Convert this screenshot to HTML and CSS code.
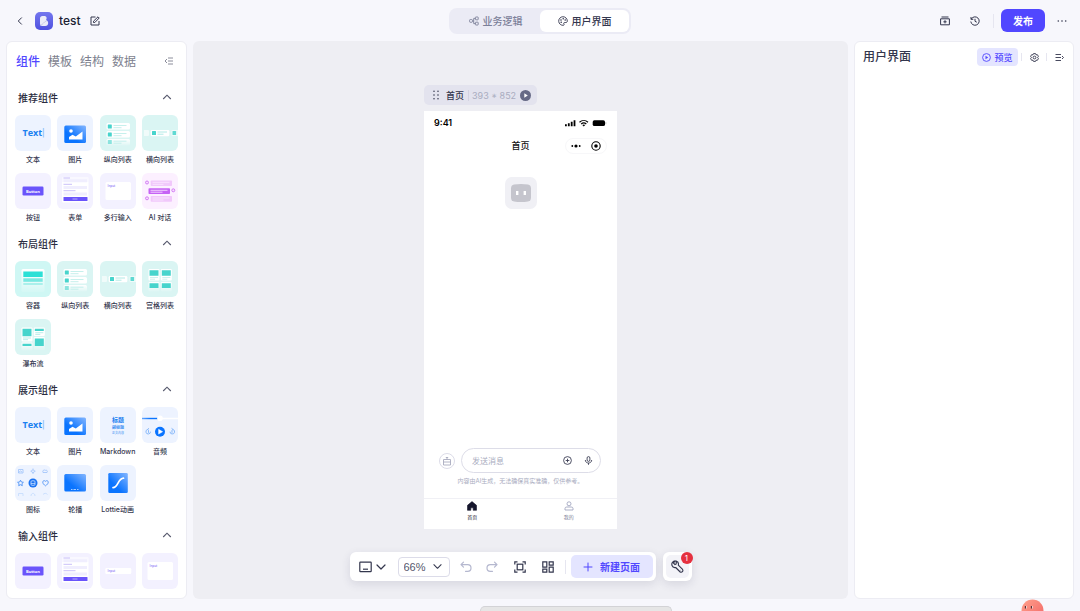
FILE: index.html
```html
<!DOCTYPE html>
<html lang="zh-CN">
<head>
    <meta charset="UTF-8">
    <meta name="viewport" content="width=device-width, initial-scale=1.0">
    <title>test</title>
    <link rel="stylesheet" href="styles.css">
</head>
<body>
    <!-- 图标定义 -->
    <svg class="defs" aria-hidden="true">
        <defs>
            <linearGradient id="blue" x1="0" y1="1" x2="1" y2="0">
                <stop offset="0.35" stop-color="#0a74ff"/>
                <stop offset="1" stop-color="#84b6ff"/>
            </linearGradient>
            <linearGradient id="fade" x1="0" y1="0" x2="0" y2="1">
                <stop offset="0" stop-color="#fff"/>
                <stop offset="1" stop-color="#fff" stop-opacity="0.1"/>
            </linearGradient>
            <linearGradient id="track" x1="0" y1="0" x2="1" y2="0">
                <stop offset="0" stop-color="#0a74ff" stop-opacity="0.6"/>
                <stop offset="0.5" stop-color="#0a74ff"/>
            </linearGradient>
            <linearGradient id="logoBg" x1="0" y1="0" x2="0" y2="1">
                <stop offset="0" stop-color="#7477ee"/>
                <stop offset="1" stop-color="#4f51e0"/>
            </linearGradient>
        </defs>
        <symbol id="up" viewBox="0 0 10 10"><path d="M1.2 7 5 3.200 8.800 7" fill="none" stroke="currentColor" stroke-width="1.1"/></symbol>
        <symbol id="down" viewBox="0 0 10 10"><path d="M1 3 5 7 9 3" fill="none" stroke="currentColor" stroke-width="1.2" stroke-linecap="round" stroke-linejoin="round"/></symbol>

        <symbol id="c-image" viewBox="0 0 36 36">
            <rect x="7.300" y="10.500" width="21.700" height="17.500" rx="1.500" fill="url(#blue)"/>
            <circle cx="14" cy="16" r="1.800" fill="#fff"/>
            <path d="M12 24.500v-2.500l3.500-2.300 3.300 1.800 6.700-5v8z" fill="#fff"/>
        </symbol>
        <symbol id="c-vlist" viewBox="0 0 36 36">
            <g fill="#fff">
                <rect x="6.500" y="8" width="23.500" height="6.500" rx="1.500"/>
                <rect x="6.500" y="16" width="23.500" height="6.500" rx="1.500"/>
                <rect x="6.500" y="24" width="23.500" height="6.500" rx="1.500" fill="url(#fade)"/>
            </g>
            <g fill="#47d4cc">
                <rect x="7.800" y="9.500" width="4" height="4" rx=".5"/>
                <rect x="7.800" y="17.500" width="4" height="4" rx=".5"/>
                <rect x="7.800" y="25" width="4" height="4" rx=".5" opacity=".6"/>
            </g>
            <path d="M13.500 10.500h13M13.500 12.700h8M13.500 18.500h13M13.500 20.700h8M13.500 26.200h13M13.500 28.200h8" stroke="#bfeeea" stroke-width=".9"/>
        </symbol>
        <symbol id="c-hlist" viewBox="0 0 36 36">
            <path d="M2 15h4a1 1 0 0 1 1 1v4a1 1 0 0 1-1 1H2z" fill="#fff" opacity=".6"/>
            <rect x="8.700" y="15" width="18.600" height="6.200" rx="1.200" fill="#fff"/>
            <path d="M36 15h-5.500a1 1 0 0 0-1 1v4a1 1 0 0 0 1 1H36z" fill="#fff" opacity=".6"/>
            <rect x="10" y="16" width="4" height="4" rx=".5" fill="#47d4cc"/>
            <rect x="30.500" y="16" width="3.600" height="4" rx=".5" fill="#5fd9d2"/>
            <path d="M15.500 17h9.500M15.500 19.200h6" stroke="#a8e8e3" stroke-width=".9"/>
        </symbol>
        <symbol id="c-form" viewBox="0 0 36 36">
            <rect x="5" y="4" width="26.500" height="25.500" rx="1" fill="#fff"/>
            <path d="M5 4h26.500v5H5z" fill="#f3f1ff" opacity=".5"/>
            <path d="M6.500 7.800h23.500M6.500 14.500h23.500M6.500 21h23.500" stroke="#f0eefe" stroke-width="3"/>
            <path d="M6.500 5h6.500M6.500 11.300h8.500M6.500 17.700h12" stroke="#c3b9f8" stroke-width=".9"/>
            <rect x="6.500" y="24" width="24" height="4" rx=".6" fill="#6a54fb"/>
            <path d="M15.500 26h5" stroke="#d5cdff" stroke-width=".7"/>
        </symbol>
        <symbol id="c-chat" viewBox="0 0 36 36">
            <g fill="#f1c8fb"><rect x="8.700" y="7.500" width="21.300" height="5.500" rx=".8"/><rect x="8.700" y="23" width="21.300" height="5.800" rx=".8"/></g>
            <rect x="6.500" y="15.300" width="21.500" height="5.700" rx=".8" fill="#c663f5"/>
            <path d="M10.500 9.300h17M10.500 11.300h11M8.500 17.300h17M8.500 19.200h12M10.500 25h17M10.500 27h11" stroke="#fbeaff" stroke-width=".8"/>
            <g fill="#f7dcff" stroke="#cf75f2" stroke-width=".9"><circle cx="5" cy="9.500" r="1.500"/><circle cx="31.300" cy="17.300" r="1.500"/><circle cx="5" cy="25.300" r="1.500"/></g>
        </symbol>
        <symbol id="c-box" viewBox="0 0 36 36">
            <rect x="6.500" y="8" width="23" height="23" rx="1.500" fill="url(#fade)"/>
            <rect x="8.300" y="10.500" width="19.400" height="5.500" fill="#2be0d6"/>
            <rect x="8.300" y="17.300" width="19.400" height="3.500" fill="#79e8e1"/>
            <rect x="8.300" y="22" width="19.400" height="2" fill="#a9f0eb"/>
        </symbol>
        <symbol id="c-grid" viewBox="0 0 36 36">
            <g fill="#fff"><rect x="6.500" y="8" width="11" height="11.500" rx="1"/><rect x="18.800" y="8" width="11" height="11.500" rx="1"/></g>
            <g fill="url(#fade)"><rect x="6.500" y="21" width="11" height="9.500" rx="1"/><rect x="18.800" y="21" width="11" height="9.500" rx="1"/></g>
            <path d="M7.500 9.200h9v5.500h-9zM19.800 9.200h9v5.500h-9zM7.500 22.200h9v4.800h-9zM19.800 22.200h9v4.800h-9z" fill="#47d4cc"/>
            <path d="M8 16.500h8M8 18.200h5M20.300 16.500h8M20.300 18.200h5" stroke="#bfeeea" stroke-width=".8"/>
        </symbol>
        <symbol id="c-flow" viewBox="0 0 36 36">
            <g fill="#fff"><rect x="6.500" y="8.500" width="11" height="14" rx="1"/><rect x="18.800" y="8.500" width="11" height="8.500" rx="1"/></g>
            <g fill="url(#fade)"><rect x="6.500" y="23.500" width="11" height="8" rx="1"/><rect x="18.800" y="18" width="11" height="13" rx="1"/></g>
            <path d="M7.500 9.800h9v7.500h-9zM19.800 9.800h9v2.200h-9zM19.800 19.500h9v7.500h-9zM7.500 24.700h9v2.300h-9z" fill="#47d4cc"/>
            <path d="M8 19h8M8 20.700h5M20.300 13.700h8M20.300 15.400h5" stroke="#a8e8e3" stroke-width=".8"/>
        </symbol>
        <symbol id="c-audio" viewBox="0 0 36 36">
            <rect y="10.800" width="17" height="1.400" fill="url(#track)"/>
            <path d="M18 11.500h18" stroke="#fff" stroke-width="1.300"/>
            <circle cx="18" cy="11.300" r="2.800" fill="#fff"/>
            <circle cx="18" cy="24.700" r="5" fill="#0a74ff"/>
            <path d="M16.600 22.300v4.800l4-2.400z" fill="#fff" stroke="#fff" stroke-width=".5" stroke-linejoin="round"/>
            <g fill="none" stroke="#7fb3f8" stroke-width=".9">
                <path d="M5.500 22.500a2.300 2.300 0 1 0 3 2.200M7 21.300l-1.600 1.200L7 23.700M6.500 23.800v2"/>
                <path d="M31 22.500a2.300 2.300 0 1 1-3 2.200M29.500 21.300l1.600 1.200-1.600 1.200M30 23.800v2"/>
            </g>
        </symbol>
        <symbol id="c-icons" viewBox="0 0 36 36">
            <circle cx="18" cy="18" r="4.500" fill="#1a73f2"/>
            <rect x="16" y="15.800" width="4" height="4.500" rx="1" fill="none" stroke="#cfe2ff" stroke-width=".8"/>
            <path d="M16 18.500h4" stroke="#cfe2ff" stroke-width=".7"/>
            <g fill="none" stroke="#4b91f5" stroke-width=".9" stroke-linejoin="round">
                <path d="m5.500 15.200.9 1.800 2 .3-1.500 1.400.4 2-1.800-1-1.800 1 .4-2-1.500-1.400 2-.3z"/>
                <path d="M30.500 20.800c-5-3.300-2-6.500 0-4.500 2-2 5 1.200 0 4.500z"/>
            </g>
            <g fill="none" stroke="#9dc2fa" stroke-width=".8">
                <path d="M3.500 4.500h4.500v3.500H3.500zM3.500 7.500l2-1.500 1.500 1M28 7.500c-.8-2 1-3.200 2.300-2.200 1.500-.5 2.700.8 1.700 2.200z"/>
                <circle cx="18" cy="6.200" r="1.400"/><path d="M18 3.500v1M18 8v1M15.500 6.200h1M19.500 6.200h1"/>
            </g>
            <path d="M3.500 31v-2.500h4.500V31M16 31c0-3.500 4-3.500 4 0M28 29.500c1-1.500 3.500-1.500 4.500 0" fill="none" stroke="#c3dafc" stroke-width=".8"/>
        </symbol>
        <symbol id="c-slide" viewBox="0 0 36 36">
            <rect x="7.300" y="9" width="21.700" height="17.500" rx="1.500" fill="url(#blue)"/>
            <path d="M14 24.500h1.500M16.500 24.500h2.500M20 24.500h1.500" stroke="#cfe2ff" stroke-width=".8"/>
        </symbol>
        <symbol id="c-lottie" viewBox="0 0 36 36">
            <rect x="8.300" y="8" width="19.500" height="20" rx="1.300" fill="url(#blue)"/>
            <path d="M13 22.700c5.500-.3 4.500-9 10.500-9.500" fill="none" stroke="#fff" stroke-width="1.700" stroke-linecap="round"/>
        </symbol>
    </svg>

    <header class="topbar">
        <div class="project">
            <button class="icon-btn" aria-label="返回">
                <svg width="10" height="10" viewBox="0 0 10 10"><path d="M6.500 1.800 3.300 5l3.200 3.200" fill="none" stroke="currentColor" stroke-width="1" stroke-linecap="round" stroke-linejoin="round"/></svg>
            </button>
            <svg class="logo" width="18" height="18" viewBox="0 0 18 18">
                <rect width="18" height="18" rx="5" fill="url(#logoBg)"/>
                <path d="M5 6.500A2.500 2.500 0 0 1 7.500 4h1.700c2.600 0 3 2.500 1.800 4 2.800.5 3.300 6-.8 6H7a2 2 0 0 1-2-2z" fill="#ececf8"/>
                <path d="M5.300 13.300c2.700-.3 3-3.300 6.700-4.800" fill="none" stroke="#c3c3df" stroke-width=".8"/>
            </svg>
            <h1>test</h1>
            <button class="icon-btn" aria-label="编辑">
                <svg width="10" height="10" viewBox="0 0 10 10" fill="none" stroke="currentColor" stroke-width="1"><path d="M5.500 1H1v8h8V5M3.500 6.500V5.200L8 .8 9.200 2 4.800 6.500z" stroke-linejoin="round"/></svg>
            </button>
        </div>
        <nav class="switch">
            <button>
                <svg width="10" height="10" viewBox="0 0 10 10" fill="none" stroke="currentColor" stroke-width=".9"><rect x=".6" y="3.500" width="2.800" height="2.800" rx=".8"/><rect x="6.400" y="1" width="2.800" height="2.800" rx=".5"/><rect x="6.400" y="6.200" width="2.800" height="2.800" rx=".5"/><path d="M3.400 5H4.700V2.400h1.700M4.700 5v2.600h1.700"/></svg>
                业务逻辑
            </button>
            <button class="on">
                <svg width="10" height="10" viewBox="0 0 10 10" fill="none" stroke="currentColor" stroke-width=".9"><path d="M5.500 9.300A4.300 4.300 0 1 1 9.300 5c0 1.500-1 1.600-2.200 1.500-1.300-.1-1.700.6-1.200 1.400.4.700.2 1.300-.4 1.400z"/><g fill="currentColor" stroke="none"><circle cx="3" cy="4" r=".8"/><circle cx="5.200" cy="2.700" r=".8"/><circle cx="7.200" cy="4" r=".8"/><circle cx="3.200" cy="6.300" r=".8"/></g></svg>
                用户界面
            </button>
        </nav>
        <div class="actions">
            <button class="icon-btn" aria-label="资源">
                <svg width="10" height="10" viewBox="0 0 10 10" fill="none" stroke="currentColor" stroke-width="1"><path d="M1.500 1h7M.6 2.800h8.800v6H.6zM5 4.200v3.200M3.400 5.800h3.200"/></svg>
            </button>
            <button class="icon-btn" aria-label="历史">
                <svg width="10" height="10" viewBox="0 0 10 10" fill="none" stroke="currentColor" stroke-width="1"><path d="M1.200 3.200A4.200 4.200 0 1 1 .8 5.500M1 1v2.300h2.300M5 2.800v2.500l1.800.9"/></svg>
            </button>
            <i class="line"></i>
            <button class="publish">发布</button>
            <button class="icon-btn" aria-label="更多">
                <svg width="10" height="10" viewBox="0 0 10 10" fill="currentColor"><circle cx="1.300" cy="5" r=".8"/><circle cx="5" cy="5" r=".8"/><circle cx="8.700" cy="5" r=".8"/></svg>
            </button>
        </div>
    </header>

    <main class="work">
        <aside class="panel library">
            <div class="tabs">
                <button class="on">组件</button>
                <button>模板</button>
                <button>结构</button>
                <button>数据</button>
                <button class="icon-btn fold" aria-label="收起">
                    <svg width="10" height="10" viewBox="0 0 10 10" fill="none" stroke="currentColor" stroke-width=".9"><path d="M4 2h5M4 5h5M4 8h5M3 3 1 5l2 2"/></svg>
                </button>
            </div>
            <div class="scroll">
                <section>
                    <h2>推荐组件<svg><use href="#up"/></svg></h2>
                    <ul class="comps">
                        <li>
                            <svg class="blue" viewBox="0 0 36 36"><text x="7.500" y="21" font-size="9" font-weight="700" fill="#1a80f0">Text</text><path d="M28.500 13v9.500" stroke="#a3cdfb" stroke-width="1.300"/></svg>
                            文本
                        </li>
                        <li><svg class="blue"><use href="#c-image"/></svg>图片</li>
                        <li><svg class="teal"><use href="#c-vlist"/></svg>纵向列表</li>
                        <li><svg class="teal"><use href="#c-hlist"/></svg>横向列表</li>
                        <li>
                            <svg class="purple" viewBox="0 0 36 36"><rect x="7.500" y="13.500" width="21" height="9" rx="1.200" fill="#6a54fb"/><text x="18" y="19.500" font-size="4" font-weight="700" text-anchor="middle" fill="#fff">Button</text></svg>
                            按钮
                        </li>
                        <li><svg class="purple"><use href="#c-form"/></svg>表单</li>
                        <li>
                            <svg class="purple" viewBox="0 0 36 36"><rect x="5.500" y="9" width="25.500" height="18" rx="1.500" fill="#fff"/><text x="7.500" y="13.700" font-size="3" font-weight="600" fill="#8b78f6">Input</text></svg>
                            多行输入
                        </li>
                        <li><svg class="pink"><use href="#c-chat"/></svg>AI 对话</li>
                    </ul>
                </section>
                <section>
                    <h2>布局组件<svg><use href="#up"/></svg></h2>
                    <ul class="comps">
                        <li><svg class="cyan"><use href="#c-box"/></svg>容器</li>
                        <li><svg class="teal"><use href="#c-vlist"/></svg>纵向列表</li>
                        <li><svg class="teal"><use href="#c-hlist"/></svg>横向列表</li>
                        <li><svg class="teal"><use href="#c-grid"/></svg>宫格列表</li>
                        <li><svg class="teal"><use href="#c-flow"/></svg>瀑布流</li>
                    </ul>
                </section>
                <section>
                    <h2>展示组件<svg><use href="#up"/></svg></h2>
                    <ul class="comps">
                        <li>
                            <svg class="blue" viewBox="0 0 36 36"><text x="7.500" y="21" font-size="9" font-weight="700" fill="#1a80f0">Text</text><path d="M28.500 13v9.500" stroke="#a3cdfb" stroke-width="1.300"/></svg>
                            文本
                        </li>
                        <li><svg class="blue"><use href="#c-image"/></svg>图片</li>
                        <li>
                            <svg class="blue" viewBox="0 0 36 36" text-anchor="middle"><text x="18" y="15" font-size="6" font-weight="700" fill="#1a80f0">标题</text><text x="18" y="21.500" font-size="4" font-weight="700" fill="#3a8ff2">副标题</text><text x="18" y="27" font-size="3" fill="#4f9bf3">正文内容</text></svg>
                            Markdown
                        </li>
                        <li><svg class="blue"><use href="#c-audio"/></svg>音频</li>
                        <li><svg class="blue"><use href="#c-icons"/></svg>图标</li>
                        <li><svg class="blue"><use href="#c-slide"/></svg>轮播</li>
                        <li><svg class="blue"><use href="#c-lottie"/></svg>Lottie动画</li>
                    </ul>
                </section>
                <section>
                    <h2>输入组件<svg><use href="#up"/></svg></h2>
                    <ul class="comps">
                        <li><svg class="purple" viewBox="0 0 36 36"><rect x="7.500" y="13.500" width="21" height="9" rx="1.200" fill="#6a54fb"/><text x="18" y="19.500" font-size="4" font-weight="700" text-anchor="middle" fill="#fff">Button</text></svg></li>
                        <li><svg class="purple"><use href="#c-form"/></svg></li>
                        <li><svg class="purple" viewBox="0 0 36 36"><rect x="5.300" y="15" width="26" height="6" rx="1.300" fill="#fff"/><text x="7.500" y="19.200" font-size="3" font-weight="600" fill="#8b78f6">Input</text></svg></li>
                        <li><svg class="purple" viewBox="0 0 36 36"><rect x="5.500" y="9" width="25.500" height="18" rx="1.500" fill="#fff"/><text x="7.500" y="13.700" font-size="3" font-weight="600" fill="#8b78f6">Input</text></svg></li>
                    </ul>
                </section>
            </div>
        </aside>

        <div class="canvas">
            <div class="device">
                <div class="page-tag">
                    <svg width="6" height="10" viewBox="0 0 6 10" fill="#3d4056"><circle cx="1" cy="1.200" r=".8"/><circle cx="5" cy="1.200" r=".8"/><circle cx="1" cy="5" r=".8"/><circle cx="5" cy="5" r=".8"/><circle cx="1" cy="8.800" r=".8"/><circle cx="5" cy="8.800" r=".8"/></svg>
                    <b>首页</b>
                    <span>393 * 852</span>
                    <svg width="11" height="11" viewBox="0 0 11 11"><circle cx="5.500" cy="5.500" r="5.500" fill="#666a86"/><path d="M4.300 3.200v4.600l3.500-2.300z" fill="#fff"/></svg>
                </div>
                <div class="phone">
                    <div class="status">
                        <span>9:41</span>
                        <svg width="42" height="8" viewBox="0 0 42 8">
                            <path d="M0 5.300h1.800v2H0zM2.900 4.300h1.800v3H2.900zM5.800 2.800h1.800v4.500H5.800zM8.600 1.200h1.800v6.100H8.600z"/>
                            <path d="M14.500 3.200c2.500-2.300 6-2.300 8.500 0M16.200 5c1.500-1.300 3.600-1.300 5.100 0" fill="none" stroke="#000" stroke-width="1.200"/>
                            <path d="m17.300 5.900 1.450 1.600 1.450-1.600c-.9-.7-2-.7-2.900 0z"/>
                            <rect x="27.700" y="1.300" width="12.300" height="5.800" rx="1.700"/><path d="M40.800 3.200v2" stroke="#999" stroke-width=".7"/>
                        </svg>
                    </div>
                    <div class="navbar">
                        <span>首页</span>
                        <div class="capsule">
                            <svg width="10" height="10" viewBox="0 0 10 10"><circle cx="1.300" cy="5" r=".9"/><circle cx="5" cy="5" r="1.600"/><circle cx="8.700" cy="5" r=".9"/></svg>
                            <svg width="10" height="10" viewBox="0 0 10 10"><circle cx="5" cy="5" r="4.200" fill="none" stroke="#000" stroke-width="1.100"/><circle cx="5" cy="5" r="1.800"/></svg>
                        </div>
                    </div>
                    <svg class="avatar" viewBox="0 0 32 32">
                        <path d="M9 7.500Q16 6.500 23 7.500 26 8 26 11.500v9Q26 24 23 24.500q-7 1-14 0Q6 24 6 20.500v-9Q6 8 9 7.500z" fill="#c5c5cd"/>
                        <path d="M12.200 14v4M19.800 14v4" stroke="#fff" stroke-width="2.400"/>
                    </svg>
                    <div class="chat">
                        <svg width="16" height="16" viewBox="0 0 16 16" fill="none"><circle cx="8" cy="8" r="7.500" stroke="#dcdce8"/><path d="M4.500 6.500h7v5.500h-7zM4.500 9h7M8 6.500V4.300M6.800 4.500h2.400" stroke="#a9acc0" stroke-width=".9" stroke-linejoin="round"/></svg>
                        <div class="message">
                            <input type="text" placeholder="发送消息" aria-label="发送消息">
                            <svg width="9" height="9" viewBox="0 0 9 9" fill="none" stroke="#3d4056" stroke-width=".9"><circle cx="4.500" cy="4.500" r="3.900"/><path d="M4.500 2.700v3.600M2.700 4.500h3.600"/></svg>
                            <svg width="9" height="9" viewBox="0 0 9 9" fill="none" stroke="#3d4056" stroke-width=".9"><rect x="3.100" y=".6" width="2.800" height="4.800" rx="1.400"/><path d="M1.300 4c0 4 6.400 4 6.400 0M4.500 7v1.800"/></svg>
                        </div>
                    </div>
                    <p class="notice">内容由AI生成，无法确保真实准确，仅供参考。</p>
                    <nav class="tabbar">
                        <a href="#" class="on">
                            <svg width="10" height="10" viewBox="0 0 10 10"><path d="M5 .6 9.500 4.300V9.300H6.200V6.800H3.800v2.500H.5v-5z" fill="#15162c" stroke="#15162c" stroke-width=".6" stroke-linejoin="round"/></svg>
                            首页
                        </a>
                        <a href="#">
                            <svg width="10" height="10" viewBox="0 0 10 10" fill="none" stroke="#a2a6c0" stroke-width=".9"><circle cx="5" cy="2.800" r="2"/><path d="M1 9V7.500Q1 6 2.800 6h4.400Q9 6 9 7.500V9z"/></svg>
                            我的
                        </a>
                    </nav>
                </div>
            </div>

            <div class="dock">
                <div class="tools">
                    <button class="icon-btn screen" aria-label="设备">
                        <svg width="13" height="12" viewBox="0 0 13 12" fill="none" stroke="currentColor" stroke-width="1.200"><rect x=".8" y="1.200" width="11.400" height="9.500" rx=".6"/><path d="M4 8.200h5"/></svg>
                        <svg width="10" height="10"><use href="#down"/></svg>
                    </button>
                    <label class="zoom">
                        <select aria-label="缩放"><option>66%</option><option>100%</option></select>
                        <svg width="9" height="9"><use href="#down"/></svg>
                    </label>
                    <button class="icon-btn off undo" aria-label="撤销">
                        <svg width="12" height="12" viewBox="0 0 12 12" fill="none" stroke="currentColor" stroke-width="1.200" stroke-linecap="round" stroke-linejoin="round"><path d="M3.500 1.200 1 3.700l2.500 2.500M1.200 3.700h6.500a3.300 3.300 0 0 1 0 6.600H5.500"/></svg>
                    </button>
                    <button class="icon-btn off" aria-label="重做">
                        <svg width="12" height="12" viewBox="0 0 12 12" fill="none" stroke="currentColor" stroke-width="1.200" stroke-linecap="round" stroke-linejoin="round"><path d="M8.500 1.200 11 3.700 8.500 6.200M10.800 3.700H4.300a3.300 3.300 0 0 0 0 6.600h2.200"/></svg>
                    </button>
                    <button class="icon-btn" aria-label="适应画布">
                        <svg width="12" height="12" viewBox="0 0 12 12" fill="none" stroke="currentColor" stroke-width="1.200"><path d="M.8 3.500V.8h2.700M8.500.8h2.700v2.700M11.200 8.500v2.700H8.500M3.500 11.200H.8V8.500"/><rect x="3.200" y="3.200" width="5.600" height="5.600"/></svg>
                    </button>
                    <button class="icon-btn" aria-label="排列">
                        <svg width="12" height="12" viewBox="0 0 12 12" fill="none" stroke="currentColor" stroke-width="1.200"><path d="M.8.800h4v5.400h-4zM7.200.800h4v3.400h-4zM.8 8.200h4v3h-4zM7.200 6.200h4v5h-4z"/></svg>
                    </button>
                    <i class="line"></i>
                    <button class="new-page">
                        <svg width="10" height="10" viewBox="0 0 10 10"><path d="M5 1v8M1 5h8" stroke="currentColor" stroke-width="1" stroke-linecap="round"/></svg>
                        新建页面
                    </button>
                </div>
                <div class="debug">
                    <button aria-label="调试">
                        <svg width="13" height="13" viewBox="0 0 13 13" fill="none" stroke="currentColor" stroke-width="1.100" stroke-linejoin="round"><path d="M4.300.9A3.500 3.500 0 0 0 1 5.500c.6 1.700 2.200 2.300 3.700 2L9.200 12c1.800.8 3.300-1 2.400-2.600L7.300 5.200C7.800 3.400 7 1.600 5.200 1v3L4 4.600 2.500 3z"/><path d="M9.700 10.200h.3"/></svg>
                    </button>
                    <span class="badge">1</span>
                </div>
            </div>
        </div>

        <aside class="panel props">
            <h2>用户界面</h2>
            <button class="preview">
                <svg width="9" height="9" viewBox="0 0 9 9"><circle cx="4.500" cy="4.500" r="3.900" fill="none" stroke="currentColor" stroke-width=".9"/><path d="M3.500 2.800v3.400l2.700-1.700z" fill="currentColor"/></svg>
                预览
            </button>
            <i class="line"></i>
            <button class="icon-btn" aria-label="设置">
                <svg width="9" height="9" viewBox="0 0 9 9" fill="none" stroke="currentColor" stroke-width=".9"><path d="m3.500.6h2l.5 1.200 1.400-.1 1 1.700-.8 1.100.8 1.100-1 1.700-1.400-.1-.5 1.200h-2L3 7.200l-1.400.1-1-1.700.8-1.100-.8-1.100 1-1.700 1.400.1z" stroke-linejoin="round"/><circle cx="4.500" cy="4.500" r="1.400"/></svg>
            </button>
            <i class="line"></i>
            <button class="icon-btn" aria-label="收起">
                <svg width="9" height="9" viewBox="0 0 9 9" fill="none" stroke="currentColor" stroke-width=".9"><path d="M.5 1.500h5.500M.5 4.500h5.500M.5 7.500h5.500M7 3l1.500 1.500L7 6"/></svg>
            </button>
        </aside>
    </main>

    <div class="drawer"></div>
    <svg class="mascot" width="23" height="12" viewBox="0 0 23 12">
        <defs><linearGradient id="skin" x1="0" y1="0" x2="1" y2="1"><stop offset="0" stop-color="#ffa18c"/><stop offset="1" stop-color="#f26464"/></linearGradient></defs>
        <circle cx="11.500" cy="11.500" r="11" fill="url(#skin)"/>
        <path d="M4.500 7v2.500M10.500 7v2.500" stroke="#55333a" stroke-width="1.300"/><path d="M5.500 7v2.500M11.500 7v2.500" stroke="#fff" stroke-width=".6"/>
    </svg>
</body>
</html>
```
FILE: styles.css
```css
*{
    box-sizing: border-box;
}
body{
    margin: 0;
    height: 100vh;
    display: flex;
    flex-direction: column;
    position: relative;
    overflow: hidden;
    background: #f7f7fc;
    color: #33364d;
    font-family: Inter, "Noto Sans CJK SC", sans-serif;
    font-size: 10px;
}
h1,h2,p,ul{
    margin: 0;
    padding: 0;
    font-weight: 500;
}
ul{
    list-style: none;
}
svg{
    display: block;
    flex: none;
}
button{
    display: flex;
    align-items: center;
    justify-content: center;
    padding: 0;
    border: 0;
    background: none;
    color: inherit;
    font: inherit;
    cursor: pointer;
    white-space: nowrap;
}
.defs{
    position: absolute;
    width: 0;
    height: 0;
}
.line{
    width: 1px;
    height: 14px;
    background: #e6e6f0;
}

/* 顶栏 */
.topbar{
    flex: none;
    height: 41px;
    display: grid;
    grid-template-columns: 1fr auto 1fr;
    align-items: center;
    padding: 0 13px;
}
.project{
    display: flex;
    align-items: center;
    padding-left: 2px;
}
.logo{
    margin: 0 6px 0 10px;
}
.project h1{
    margin-right: 9px;
    font-size: 12px;
    line-height: 18px;
    color: #1c1e33;
}
.switch{
    display: flex;
    height: 26px;
    padding: 2px;
    border-radius: 8px;
    background: #ebebf5;
}
.switch button{
    width: 89px;
    gap: 4px;
    border-radius: 6px;
    color: #7c8099;
    font-weight: 500;
}
.switch .on{
    background: #fff;
    color: #33364d;
}
.actions{
    display: flex;
    align-items: center;
    justify-content: flex-end;
}
.actions .line{
    margin: 0 7px 0 13px;
}
.actions .icon-btn + .icon-btn{
    margin-left: 20px;
}
.publish{
    width: 44px;
    height: 23px;
    margin-right: 12px;
    border-radius: 6px;
    background: #5147ff;
    color: #fff;
    font-weight: 700;
}

/* 三栏 */
.work{
    flex: 1;
    min-height: 0;
    display: grid;
    grid-template-columns: 181px 1fr 220px;
    gap: 6px;
    padding: 0 6px 12px;
}
.panel{
    border: 1px solid #ececf3;
    border-radius: 6px;
    background: #fff;
}
.library{
    display: flex;
    flex-direction: column;
    min-height: 0;
    padding: 0 8px 8px;
}
.tabs{
    flex: none;
    display: flex;
    gap: 8px;
    height: 37px;
    margin-bottom: 3px;
    padding-left: 1px;
    align-items: center;
    font-size: 12px;
    color: #7d7f8e;
}
.tabs .on{
    color: #5147ff;
    font-weight: 500;
}
.fold{
    margin: 0 4px 0 auto;
}
.scroll{
    flex: 1;
    min-height: 0;
    overflow-y: auto;
    scrollbar-width: none;
}
.scroll section{
    margin-bottom: 1px;
}
.scroll h2{
    display: flex;
    align-items: center;
    justify-content: space-between;
    height: 30px;
    margin: 0 6px 3px 3px;
    font-size: 10px;
    color: #2a2c40;
}
.scroll h2 svg{
    width: 10px;
    height: 10px;
    color: #55586c;
}
.comps{
    display: grid;
    grid-template-columns: repeat(4, 36px);
    justify-content: space-between;
    row-gap: 4px;
}
.comps li{
    display: flex;
    flex-direction: column;
    align-items: center;
    font-size: 7px;
    font-weight: 500;
    line-height: 18px;
    white-space: nowrap;
}
.comps svg{
    width: 36px;
    height: 36px;
    border-radius: 6px;
    font-family: "Open Sans", "Noto Sans CJK SC", sans-serif;
}
.blue{
    background: #edf3ff;
}
.teal{
    background: #daf5f3;
}
.cyan{
    background: #cff7f4;
}
.purple{
    background: #f3f1ff;
}
.pink{
    background: #fcf0ff;
}

/* 画布 */
.canvas{
    position: relative;
    display: flex;
    justify-content: center;
    align-items: flex-start;
    padding-top: 44px;
    border-radius: 6px;
    background: #eeeef3;
}
.device{
    width: 193px;
}
.page-tag{
    display: flex;
    align-items: center;
    width: max-content;
    height: 20px;
    margin-bottom: 6px;
    padding: 0 6px 0 9px;
    border-radius: 5px;
    background: #e3e3ee;
    font-size: 9px;
}
.page-tag b{
    margin-left: 7px;
    font-weight: 500;
}
.page-tag span{
    margin: 0 4px;
    padding-left: 3px;
    border-left: 1px solid #d3d3e2;
    color: #a9acc0;
}
.phone{
    display: flex;
    flex-direction: column;
    aspect-ratio: 393 / 852;
    background: #fff;
}
.status{
    display: flex;
    align-items: center;
    justify-content: space-between;
    height: 23px;
    padding: 0 10px;
    font-size: 9px;
    font-weight: 600;
    color: #000;
}
.navbar{
    display: grid;
    grid-template-columns: 1fr auto 1fr;
    align-items: center;
    height: 23px;
    padding: 0 10px;
    font-size: 9px;
    font-weight: 500;
    color: #111;
}
.navbar span{
    grid-column: 2;
}
.capsule{
    justify-self: end;
    display: flex;
    align-items: center;
    justify-content: space-between;
    width: 42px;
    height: 16px;
    padding: 0 5px;
    border: 1px solid #f7f7f9;
    border-radius: 8px;
}
.avatar{
    align-self: center;
    width: 32px;
    height: 32px;
    margin-top: 20px;
    border-radius: 7px;
    background: #f0f0f5;
}
.chat{
    display: flex;
    align-items: center;
    gap: 6px;
    margin: auto 16px 0 15px;
}
.message{
    flex: 1;
    display: flex;
    align-items: center;
    gap: 12px;
    height: 25px;
    padding: 0 7px 0 10px;
    border: 1px solid #dddde8;
    border-radius: 13px;
}
.message input{
    flex: 1;
    width: 0;
    padding: 0;
    border: 0;
    outline: 0;
    background: none;
    font: inherit;
    font-size: 8px;
}
.message input::placeholder{
    color: #a9acc0;
}
.notice{
    height: 25px;
    line-height: 16px;
    font-size: 6px;
    font-weight: 400;
    text-align: center;
    white-space: nowrap;
    color: #a9acc0;
}
.tabbar{
    display: flex;
    height: 31px;
    border-top: 1px solid #f0f0f5;
}
.tabbar a{
    flex: 1;
    display: flex;
    flex-direction: column;
    align-items: center;
    gap: 1px;
    padding-top: 2px;
    font-size: 5px;
    line-height: 10px;
    text-decoration: none;
    color: #7c8099;
}
.tabbar .on{
    color: #15162c;
}

/* 底部工具条 */
.dock{
    position: absolute;
    left: 50%;
    bottom: 18px;
    transform: translateX(-50%);
    display: flex;
    gap: 7px;
    color: #33364d;
}
.tools,.debug{
    display: flex;
    align-items: center;
    height: 29px;
    padding: 3px;
    border-radius: 6px;
    background: #fff;
    box-shadow: 0 3px 10px rgba(40, 40, 80, .12);
}
.tools .icon-btn{
    margin-right: 16px;
}
.tools .screen{
    gap: 4px;
    margin: 0 12px 0 6px;
}
.tools .undo{
    margin-right: 14px;
}
.zoom{
    display: flex;
    align-items: center;
    width: 52px;
    height: 20px;
    margin-right: 10px;
    padding: 0 7px 0 5px;
    border: 1px solid #dcdce9;
    border-radius: 4px;
}
.zoom select{
    flex: 1;
    width: 0;
    padding: 0;
    border: 0;
    outline: 0;
    background: none;
    appearance: none;
    font-family: "Liberation Sans", sans-serif;
    font-size: 11px;
    color: #55586c;
}
.tools .line{
    margin: 0 5px 0 -5px;
}
.new-page{
    gap: 7px;
    width: 82px;
    height: 23px;
    border-radius: 5px;
    background: #e4e5ff;
    color: #5147ff;
    font-weight: 700;
}
.tools .off{
    color: #b5b8cf;
}
.debug{
    position: relative;
}
.debug button{
    width: 23px;
    height: 23px;
    border-radius: 5px;
    background: #f3f3f8;
}
.badge{
    position: absolute;
    top: 0;
    right: -1px;
    width: 12px;
    height: 12px;
    border-radius: 50%;
    background: #e5303f;
    color: #fff;
    font-size: 8px;
    line-height: 12px;
    text-align: center;
}

/* 右侧属性 */
.props{
    display: flex;
    align-items: flex-start;
    gap: 3px;
    padding: 6px 5px 0 8px;
}
.props h2{
    margin-right: auto;
    font-size: 12px;
    line-height: 18px;
}
.props .line{
    height: 8px;
    margin-top: 5px;
}
.props .icon-btn{
    width: 18px;
    height: 18px;
}
.preview{
    gap: 3px;
    width: 41px;
    height: 18px;
    border-radius: 4px;
    background: #e4e5ff;
    color: #5147ff;
    font-size: 9px;
    font-weight: 500;
}

.drawer{
    position: absolute;
    left: 480px;
    bottom: 0;
    width: 192px;
    height: 5px;
    border: 1px solid #d3d3d6;
    border-bottom: 0;
    border-radius: 5px 5px 0 0;
    background: #e6e6e6;
}
.mascot{
    position: absolute;
    right: 36px;
    bottom: 0;
}
```
